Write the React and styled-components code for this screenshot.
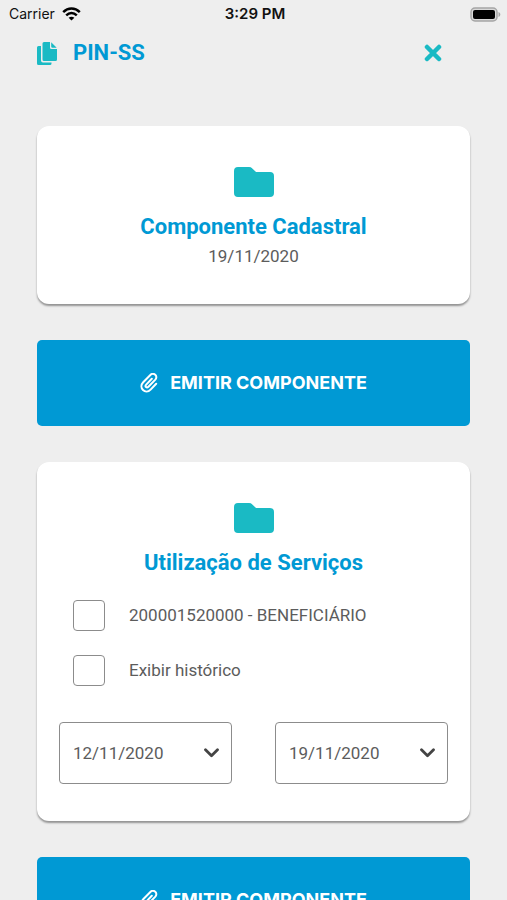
import React from "react";
import styled, { createGlobalStyle } from "styled-components";

const colors = {
  page: "#eeeeee",
  blue: "#0099d4",
  teal: "#1abac4",
  text: "#5c5c5c",
  line: "#8c8c8c",
};

const GlobalStyle = createGlobalStyle`
  *, *::before, *::after { box-sizing: border-box; }
  html { scrollbar-width: none; }
  body {
    margin: 0;
    background: ${colors.page};
    color: ${colors.text};
    font-family: Roboto, "Liberation Sans", sans-serif;
  }
`;

const StatusBar = styled.div`
  display: grid;
  grid-template-columns: 1fr auto 1fr;
  align-items: center;
  height: 28px;
  padding: 0 6px 0 9px;
  color: #111111;
  font: 400 14px/28px Inter, sans-serif;
`;

const Carrier = styled.div`
  display: flex;
  align-items: center;
  gap: 7px;
`;

const Clock = styled.time`
  font-size: 15px;
  font-weight: 600;
`;

const Battery = styled.svg`
  justify-self: end;
`;

const Header = styled.header`
  display: flex;
  align-items: center;
  height: 50px;
  padding: 0 65px 0 37px;
`;

const HeaderTitle = styled.h1`
  flex: 1;
  margin: 0 0 0 16px;
  color: ${colors.blue};
  font-size: 22px;
  font-weight: 700;
  line-height: 28px;
`;

const CloseButton = styled.button`
  display: flex;
  padding: 0;
  border: 0;
  background: none;
  color: ${colors.teal};
  cursor: pointer;
`;

const Content = styled.main`
  display: flex;
  flex-direction: column;
  gap: 36px;
  padding: 48px 37px 36px;
`;

const Card = styled.section`
  display: flex;
  flex-direction: column;
  align-items: center;
  padding: 41px 22px 33px;
  border-radius: 12px;
  background: #ffffff;
  box-shadow: 0 2px 2px rgba(0, 0, 0, 0.38);
`;

const CardTitle = styled.h2`
  margin: 16px 0 0;
  color: ${colors.blue};
  font-size: 22px;
  font-weight: 700;
  line-height: 28px;
  text-align: center;
`;

const CardDate = styled.p`
  margin: 0;
  font-size: 17px;
  line-height: 30px;
`;

const PrimaryButton = styled.button`
  display: flex;
  align-items: center;
  justify-content: center;
  gap: 12px;
  height: 86px;
  padding: 0 16px;
  border: 0;
  border-radius: 5px;
  background: ${colors.blue};
  color: #ffffff;
  font: 700 18px/24px Inter, sans-serif;
  cursor: pointer;
`;

const Options = styled.div`
  display: flex;
  flex-direction: column;
  align-self: stretch;
  gap: 24px;
  padding: 23px 14px 0;
`;

const Option = styled.label`
  display: flex;
  align-items: center;
  gap: 24px;
  font-size: 17px;
  line-height: 31px;
`;

const Checkbox = styled.input`
  appearance: none;
  flex: none;
  width: 32px;
  height: 31px;
  margin: 0;
  border: 1px solid ${colors.line};
  border-radius: 4px;
  background: #ffffff;

  &:checked {
    background: ${colors.teal};
  }
`;

const DateRange = styled.div`
  display: grid;
  grid-template-columns: 1fr 1fr;
  align-self: stretch;
  gap: 43px;
  padding: 36px 0 4px;
`;

const DateField = styled.div`
  display: grid;
  align-items: center;

  > * {
    grid-area: 1 / 1;
  }

  > svg {
    justify-self: end;
    margin-right: 13px;
    pointer-events: none;
  }
`;

const DateSelect = styled.select`
  appearance: none;
  width: 100%;
  height: 62px;
  padding: 0 40px 0 13px;
  border: 1px solid ${colors.line};
  border-radius: 4px;
  background: #ffffff;
  color: ${colors.text};
  font: 400 17px/24px Roboto, sans-serif;
`;

const WifiIcon = () => (
  <svg width="19" height="14" viewBox="0 0 19 14" fill="none" stroke="#000" strokeWidth="2.5" aria-hidden="true">
    <path d="M1.2 5.2C6 .4 13 .4 17.8 5.2" />
    <path d="M4.2 8.3c3.2-3 7.4-3 10.6 0" />
    <path d="M9.5 13.6 6.6 10.7c1.7-1.4 4.1-1.4 5.8 0z" fill="#000" stroke="none" />
  </svg>
);

const BatteryIcon = () => (
  <Battery width="31" height="15" viewBox="0 0 31 15" aria-label="Bateria" role="img">
    <rect x="1" y="1" width="26" height="13" rx="4" fill="#d8d8d8" stroke="#a5a5a5" strokeWidth="1.5" />
    <rect x="3" y="3" width="22" height="9" rx="2" fill="#000" />
    <path d="M28.5 5c2.4.8 2.4 4.2 0 5z" fill="#a5a5a5" />
  </Battery>
);

const CopyIcon = () => (
  <svg width="20" height="23" viewBox="0 0 20 23" fill={colors.teal} aria-hidden="true">
    <path d="M7 0h6v5.5q0 1.500 1.500 1.500H20v10.500q0 1.500-1.500 1.500H7q-1.500 0-1.500-1.500v-16Q5.500 0 7 0z" />
    <path d="M14.200 .3 19.700 5.800h-4.300q-1.200 0-1.200-1.200z" />
    <path d="M1.500 4H4v14.500Q4 20.500 6 20.500h8.500V21.500q0 1.500-1.500 1.500H1.500Q0 23 0 21.500v-16Q0 4 1.500 4z" />
  </svg>
);

const CloseIcon = () => (
  <svg width="18" height="18" viewBox="0 0 18 18" fill="none" stroke="currentColor" strokeWidth="4.5" strokeLinecap="round" aria-hidden="true">
    <path d="M3 3 15 15M15 3 3 15" />
  </svg>
);

const FolderIcon = () => (
  <svg width="40" height="30" viewBox="0 0 40 30" fill={colors.teal} aria-hidden="true">
    <path d="M4 0H15q2 0 3.300 1.400L22 5H36q4 0 4 4V26q0 4-4 4H4q-4 0-4-4V4Q0 0 4 0z" />
  </svg>
);

const ClipIcon = () => (
  <svg width="18" height="20" viewBox="0 0 18 20" fill="none" stroke="currentColor" strokeWidth="2" strokeLinecap="round" aria-hidden="true">
    <path d="M11.800 5.800 6.200 11.600c-1.700 1.800.5 3.900 2.200 2.200l6.700-6.900c3.600-3.900-1.500-8.200-5-4.700L3.200 9.300c-5.200 5.500 2.200 12.600 7.400 7.300l5.600-5.800" />
  </svg>
);

const ChevronIcon = () => (
  <svg width="15" height="10" viewBox="0 0 15 10" fill="none" stroke="#444" strokeWidth="2.8" strokeLinecap="round" strokeLinejoin="round" aria-hidden="true">
    <path d="M1.500 1.700 7.500 7.700l6-6" />
  </svg>
);

const IssueButton = () => (
  <PrimaryButton type="button">
    <ClipIcon />
    EMITIR COMPONENTE
  </PrimaryButton>
);

const DatePicker = ({ label, value }) => (
  <DateField>
    <DateSelect aria-label={label} defaultValue={value}>
      <option>{value}</option>
    </DateSelect>
    <ChevronIcon />
  </DateField>
);

export default function App() {
  return (
    <>
      <GlobalStyle />
      <StatusBar>
        <Carrier>
          Carrier
          <WifiIcon />
        </Carrier>
        <Clock>3:29 PM</Clock>
        <BatteryIcon />
      </StatusBar>
      <Header>
        <CopyIcon />
        <HeaderTitle>PIN-SS</HeaderTitle>
        <CloseButton type="button" aria-label="Fechar">
          <CloseIcon />
        </CloseButton>
      </Header>
      <Content>
        <Card>
          <FolderIcon />
          <CardTitle>Componente Cadastral</CardTitle>
          <CardDate>19/11/2020</CardDate>
        </Card>
        <IssueButton />
        <Card>
          <FolderIcon />
          <CardTitle>Utilização de Serviços</CardTitle>
          <Options>
            <Option>
              <Checkbox type="checkbox" />
              200001520000 - BENEFICIÁRIO
            </Option>
            <Option>
              <Checkbox type="checkbox" />
              Exibir histórico
            </Option>
          </Options>
          <DateRange>
            <DatePicker label="Data inicial" value="12/11/2020" />
            <DatePicker label="Data final" value="19/11/2020" />
          </DateRange>
        </Card>
        <IssueButton />
      </Content>
    </>
  );
}
